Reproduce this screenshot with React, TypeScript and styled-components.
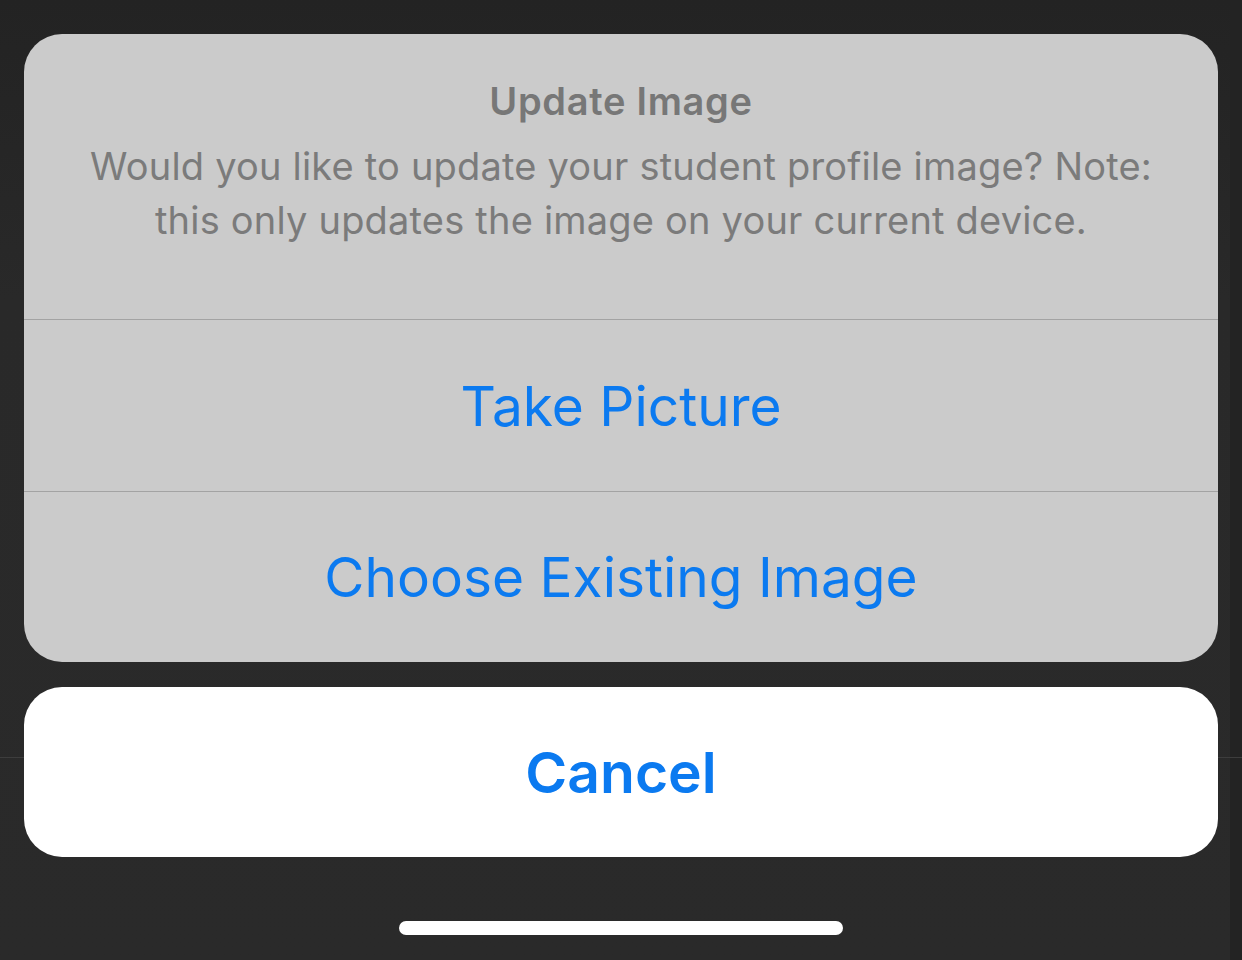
import React from "react";
import styled, { createGlobalStyle } from "styled-components";

const Global = createGlobalStyle`
  html, body { margin: 0; padding: 0; background: #282828; }
  body { font-family: Inter, "Noto Sans", "Liberation Sans", sans-serif; -webkit-font-smoothing: antialiased; }
`;

const Screen = styled.div`
  width: 1242px;
  height: 960px;
  box-sizing: border-box;
  padding: 34px 24px 0;
  display: flex;
  flex-direction: column;
  background:
    linear-gradient(to bottom, transparent 757px, #3d3d3d 757px, #3d3d3d 758px, transparent 758px),
    linear-gradient(to right, transparent 1230px, #232323 1230px),
    linear-gradient(to bottom, #232323 0px, #292929 300px, #2a2a2a 960px);
  overflow: hidden;
`;

const Sheet = styled.div`
  background: #cbcbcb;
  border-radius: 38px;
  overflow: hidden;
  display: flex;
  flex-direction: column;
`;

const Header = styled.div`
  height: 286px;
  box-sizing: border-box;
  padding: 46px 40px 0;
  display: flex;
  flex-direction: column;
  align-items: center;
  text-align: center;
  border-bottom: 1px solid #a3a3a3;
`;

const Title = styled.div`
  font-size: 38px;
  font-weight: 600;
  color: #777777;
  line-height: 42px;
  letter-spacing: 0.7px;
`;

const Message = styled.div`
  margin-top: 17px;
  font-size: 38px;
  font-weight: 400;
  color: #7b7b7b;
  line-height: 54px;
  letter-spacing: 0.2px;
  white-space: nowrap;
`;

const Action = styled.button<{ $divider?: boolean; $bold?: boolean }>`
  height: ${(p) => (p.$divider ? "172px" : "170px")};
  border: none;
  background: transparent;
  padding: 0;
  font-family: inherit;
  font-size: ${(p) => (p.$bold ? "57px" : "55px")};
  font-weight: ${(p) => (p.$bold ? 600 : 400)};
  color: #0b7af0;
  display: flex;
  align-items: center;
  justify-content: center;
  border-bottom: ${(p) => (p.$divider ? "1px solid #a3a3a3" : "none")};
  box-sizing: border-box;
`;

const CancelCard = styled.div`
  margin-top: 25px;
  background: #ffffff;
  border-radius: 38px;
  overflow: hidden;
  display: flex;
  flex-direction: column;
`;

const HomeBar = styled.div`
  margin: 64px auto 0;
  width: 444px;
  height: 14px;
  border-radius: 7px;
  background: #ffffff;
`;

export default function App() {
  return (
    <>
      <Global />
      <Screen>
        <Sheet>
          <Header>
            <Title>Update Image</Title>
            <Message>
              Would you like to update your student profile image? Note:
              <br />
              this only updates the image on your current device.
            </Message>
          </Header>
          <Action $divider>Take Picture</Action>
          <Action>Choose Existing Image</Action>
        </Sheet>
        <CancelCard>
          <Action $bold>Cancel</Action>
        </CancelCard>
        <HomeBar />
      </Screen>
    </>
  );
}
